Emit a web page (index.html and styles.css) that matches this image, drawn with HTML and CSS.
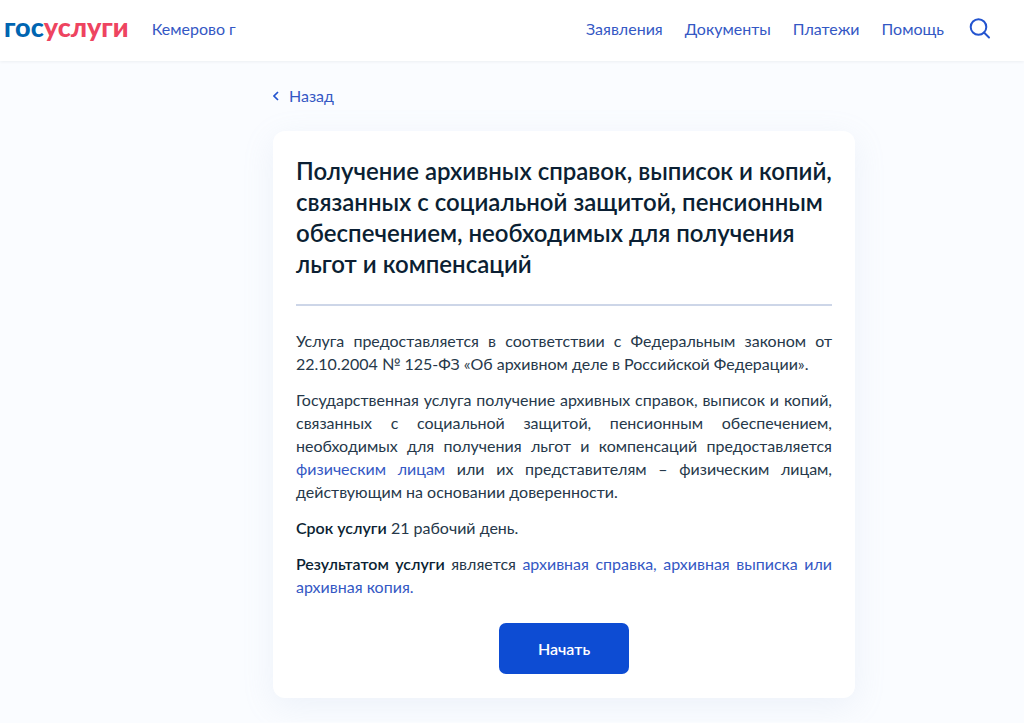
FILE: index.html
```html
<!DOCTYPE html>
<html lang="ru">

<head>
	<meta charset="utf-8">
	<meta name="viewport" content="width=device-width, initial-scale=1">
	<title>Госуслуги</title>
	<link rel="stylesheet" href="styles.css">
</head>

<body>
	<header class="header">
		<a href="#" class="logo"><span class="logo-blue">гос</span><span class="logo-red">услуги</span></a>
		<a href="#" class="region">Кемерово г</a>
		<nav class="menu">
			<a href="#">Заявления</a>
			<a href="#">Документы</a>
			<a href="#">Платежи</a>
			<a href="#">Помощь</a>
		</nav>
		<button type="button" class="search" aria-label="Поиск">
			<svg width="22" height="22" viewBox="0 0 22 22" fill="none" stroke="#2354cf" stroke-width="2" stroke-linecap="round">
				<circle cx="9.5" cy="10" r="7.8"/>
				<path d="M15 15.5l5 5"/>
			</svg>
		</button>
	</header>

	<main class="content">
		<a href="#" class="back">
			<svg width="8" height="10" viewBox="0 0 8 10" fill="none" stroke="#2354cf" stroke-width="1.7">
				<path d="M5 1L1 5l4 4"/>
			</svg>
			Назад
		</a>

		<section class="card">
			<h1>Получение архивных справок, выписок и копий, связанных с социальной защитой, пенсионным обеспечением, необходимых для получения льгот и компенсаций</h1>
			<div class="text">
				<p>Услуга предоставляется в соответствии с Федеральным законом от 22.10.2004 № 125-ФЗ «Об архивном деле в Российской Федерации».</p>
				<p>Государственная услуга получение архивных справок, выписок и копий, связанных с социальной защитой, пенсионным обеспечением, необходимых для получения льгот и компенсаций предоставляется <a href="#">физическим лицам</a> или их представителям – физическим лицам, действующим на основании доверенности.</p>
				<p><b>Срок услуги</b> 21 рабочий день.</p>
				<p><b>Результатом услуги</b> является <a href="#">архивная справка, архивная выписка или архивная копия.</a></p>
			</div>
			<button type="button" class="start">Начать</button>
		</section>
	</main>
</body>

</html>
```
FILE: styles.css
```css
* {
	box-sizing: border-box;
}

body {
	margin: 0;
	background: #fafcff;
	color: #0b1f33;
	font-family: Lato, "Open Sans", sans-serif;
	font-size: 16px;
	line-height: 23px;
}

a {
	color: #3458c4;
	text-decoration: none;
}

.header {
	display: flex;
	align-items: center;
	height: 61px;
	padding: 0 33px 5px 4px;
	background: #fff;
	box-shadow: 0 1px 3px rgba(11, 31, 51, 0.06);
}

.logo {
	margin-right: 23px;
	padding-bottom: 4px;
	font-size: 27px;
	font-weight: 900;
}

.logo-blue {
	color: #0065b1;
}

.logo-red {
	color: #ee4460;
}

.menu {
	display: flex;
	gap: 22px;
	margin-left: auto;
}

.search {
	display: flex;
	margin-left: 25px;
	padding: 0;
	border: 0;
	background: none;
}

.content {
	max-width: 686px;
	margin: 0 auto;
	padding: 23px 0 24px 104px;
	box-sizing: content-box;
	width: 582px;
}

.back {
	display: flex;
	align-items: center;
	gap: 8px;
}

.card {
	margin-top: 24px;
	padding: 24px 23px;
	border-radius: 12px;
	background: #fff;
	box-shadow: 0 8px 32px rgba(155, 175, 215, 0.14);
}

h1 {
	margin: 0 0 23px;
	padding-bottom: 25px;
	border-bottom: 2px solid #cdd6e8;
	font-size: 24px;
	font-weight: 600;
	line-height: 31px;
}

.text {
	color: #26384a;
}

.text p {
	margin: 0 0 13px;
	text-align: justify;
}

.text b {
	color: #0b1f33;
	font-weight: 600;
}

.start {
	display: block;
	width: 130px;
	height: 51px;
	margin: 25px auto 0;
	border: 0;
	border-radius: 7px;
	background: #0d4cd3;
	color: #fff;
	font: 600 16px Lato, sans-serif;
}
```
